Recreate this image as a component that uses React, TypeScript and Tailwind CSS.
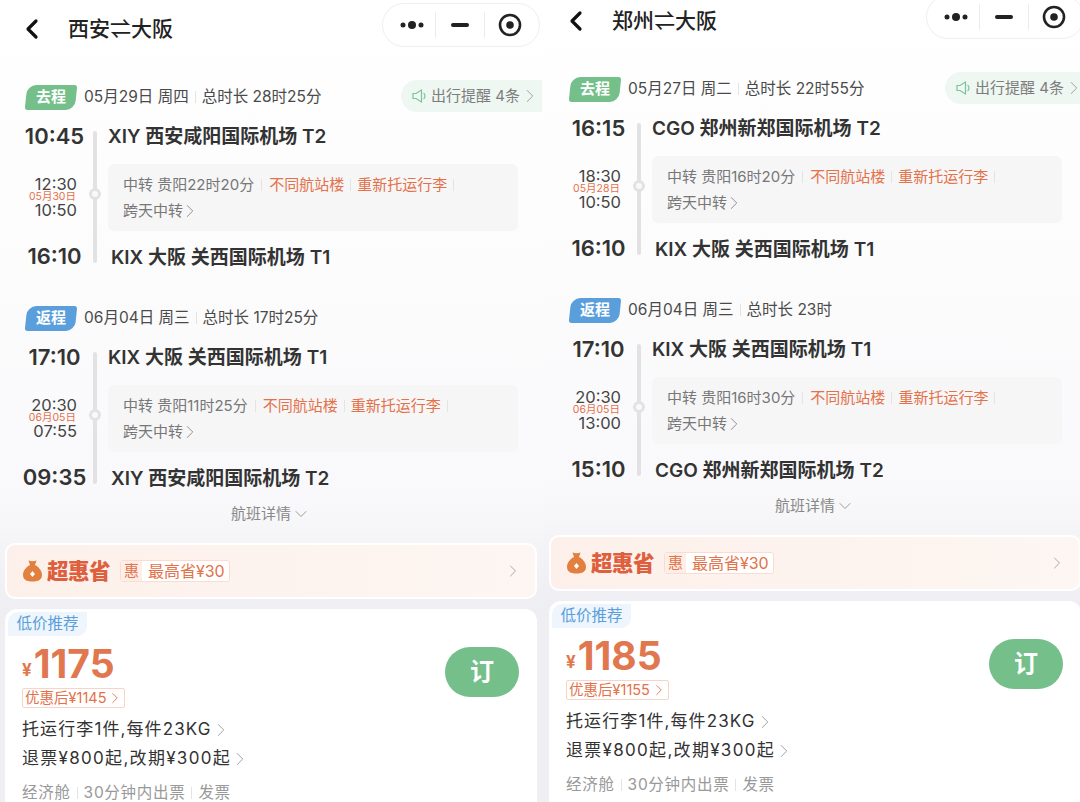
import { ChevronLeft, ChevronRight, ChevronDown } from "lucide-react";

const cjk = "font-['Inter','Noto_Sans_CJK_SC',sans-serif]";

type Leg = {
  tag: string;
  tagColor: string;
  date: string;
  total: string;
  dep: string;
  depPlace: string;
  arr1: string;
  dayNote: string;
  arr2: string;
  stop: string;
  end: string;
  endPlace: string;
};

function Sep({ wide }: { wide?: boolean }) {
  return (
    <span
      className={
        wide
          ? "mx-[7px] inline-block h-[12px] w-px bg-[#e4e4e4]"
          : "mx-[6px] inline-block h-[12px] w-px bg-[#e4e4e4]"
      }
    />
  );
}

function Capsule() {
  return (
    <div className="flex h-[44px] w-[158px] shrink-0 items-center rounded-full border border-[#efefef] bg-white/70">
      <div className="flex w-[52px] justify-center pl-[6px]">
        <svg width="26" height="10" viewBox="0 0 26 10" fill="#222">
          <circle cx="4" cy="5" r="2.5" />
          <circle cx="13" cy="5" r="4" />
          <circle cx="22" cy="5" r="2.5" />
        </svg>
      </div>
      <div className="h-[26px] w-px bg-[#ececec]" />
      <div className="flex w-[48px] justify-center">
        <div className="h-[4px] w-[18px] rounded-full bg-[#222]" />
      </div>
      <div className="h-[26px] w-px bg-[#ececec]" />
      <div className="flex flex-1 justify-center pr-[4px]">
        <svg width="24" height="24" viewBox="0 0 24 24" fill="none">
          <circle cx="12" cy="12" r="10" stroke="#222" strokeWidth="2.6" />
          <circle cx="12" cy="12" r="3.8" fill="#222" />
        </svg>
      </div>
    </div>
  );
}

function LegBlock({ leg }: { leg: Leg }) {
  return (
    <div>
      <div className="flex h-[28px] items-center">
        <div
          className={`ml-[26px] flex h-[25px] w-[50px] -skew-x-[6deg] items-center justify-center rounded-tl-[9px] rounded-tr-[3px] rounded-br-[9px] rounded-bl-[3px] ${leg.tagColor}`}
        >
          <span className="skew-x-[6deg] text-[15px] font-bold text-white">{leg.tag}</span>
        </div>
        <div className="ml-[8px] flex items-center text-[15.5px] whitespace-nowrap text-[#4a4a4a]">
          <span>{leg.date}</span>
          <Sep />
          <span>{leg.total}</span>
        </div>
      </div>
      <div className="mt-[12px] flex">
        <div className="relative -mt-px flex w-[108px] shrink-0 flex-col">
          <div className="h-[28px] w-[109px] text-center text-[22px] leading-[28px] font-semibold text-[#333]">{leg.dep}</div>
          <div className="mt-[26px] w-[77px] text-right text-[#444]">
            <div className="text-[16.5px] leading-[16px]">{leg.arr1}</div>
            <div className="pr-px text-[10.5px] leading-[10px] text-[#e4714a]">{leg.dayNote}</div>
            <div className="text-[16.5px] leading-[16px]">{leg.arr2}</div>
          </div>
          <div className="mt-[24px] h-[28px] w-[109px] text-center text-[22px] leading-[28px] font-semibold text-[#333]">{leg.end}</div>
          <div className="absolute top-[9px] left-[93px] h-[132px] w-[4px] rounded-full bg-[#e2e2e4]" />
          <div className="absolute top-[66px] left-[89px] size-[12px] rounded-full border-[3px] border-[#e2e2e4] bg-[#f9f9fa]" />
        </div>
        <div className="min-w-0 flex-1 pr-[26px]">
          <div className="h-[28px] text-[19px] leading-[28px] font-semibold whitespace-nowrap text-[#333]">{leg.depPlace}</div>
          <div className="mt-[13px] h-[67px] rounded-[6px] bg-[#f6f6f7] pt-[10px] pl-[15px] text-[15px] leading-[22px] text-[#777]">
            <div className="flex items-center whitespace-nowrap">
              <span>{leg.stop}</span>
              <Sep wide />
              <span className="text-[#e4714a]">不同航站楼</span>
              <Sep />
              <span className="text-[#e4714a]">重新托运行李</span>
              <Sep />
            </div>
            <div className="mt-[4px] flex items-center">
              跨天中转
              <ChevronRight size={22} strokeWidth={1} className="-ml-[4px] text-[#888]" />
            </div>
          </div>
          <div className="mt-[13px] ml-[3px] h-[28px] text-[19px] leading-[28px] font-semibold whitespace-nowrap text-[#333]">{leg.endPlace}</div>
        </div>
      </div>
    </div>
  );
}

function MoneyBag() {
  return (
    <svg width="19" height="22" viewBox="0 0 19 22">
      <path d="M5.5 0.5 Q9.5 2 13.5 0.5 L12 5 C16 7 19 11 19 15 C19 19.5 15.5 21.5 9.5 21.5 C3.5 21.5 0 19.5 0 15 C0 11 3 7 7 5 Z" fill="#e2803f" />
      <path d="M9.5 11 L12 14 L9.5 17 L7 14 Z" fill="#fff" />
    </svg>
  );
}

function Panel({
  title,
  price,
  after,
  legs,
  className,
}: {
  title: string;
  price: string;
  after: string;
  legs: Leg[];
  className: string;
}) {
  return (
    <div className={`w-[544px] shrink-0 overflow-hidden ${className}`}>
      <div className="h-[609px] bg-gradient-to-b from-white via-[#f9f9fb] via-[82%] to-[#eeeef3]">
        <div className="flex h-[58px] items-center">
          <ChevronLeft size={32} strokeWidth={2.4} className="ml-[16px] text-[#111]" />
          <div className="ml-[20px] flex-1 text-[21px] font-medium whitespace-nowrap text-[#222]">{title}</div>
          <div className="mr-[4px] -mt-[8px]">
            <Capsule />
          </div>
        </div>
        <div className="relative mt-[25px]">
          <div className="absolute top-[-3px] left-[401px] flex h-[32px] w-[141px] items-center rounded-l-full bg-[#eff7f2] pl-[11px] text-[15px] whitespace-nowrap text-[#7d7d7d]">
            <svg width="16" height="16" viewBox="0 0 16 16" fill="none" stroke="#79c596" strokeWidth="1.2" className="mr-[3px]">
              <path d="M1 5.5 H4 L9.5 2 V14 L4 10.5 H1 Z" />
              <path d="M11.5 5 C13.5 6.5 13.5 9.5 11.5 11" />
            </svg>
            出行提醒 4条
            <ChevronRight size={22} strokeWidth={1} className="-ml-[1px] text-[#999]" />
          </div>
          <LegBlock leg={legs[0]} />
          <div className="h-[32px]" />
          <LegBlock leg={legs[1]} />
        </div>
        <div className="mt-[10px] flex items-center justify-center pr-[2px] text-[15px] leading-[22px] text-[#888]">
          航班详情
          <ChevronDown size={20} strokeWidth={1} />
        </div>
        <div className="mt-[18px] mr-[7px] ml-[5px] flex h-[56px] items-center rounded-[10px] border-2 border-white bg-gradient-to-r from-[#fdf0ea] to-[#fdf6f2] pr-[12px] pl-[16px]">
          <MoneyBag />
          <span className="ml-[5px] text-[21.5px] font-black tracking-tight text-[#dd5f3e]">超惠省</span>
          <div className="ml-[10px] flex h-[22px] items-center rounded-[3px] border border-[#fbdcd0] bg-white text-[16px] text-[#e4714a]">
            <span className="flex h-full w-[21px] items-center justify-center bg-[#fdeee7] text-[15px]">惠</span>
            <span className="mr-[4px] ml-[6px]">最高省¥30</span>
          </div>
          <ChevronRight size={20} strokeWidth={1} className="ml-auto text-[#999]" />
        </div>
      </div>
      <div className="-mt-px h-[260px] bg-[#eeeef3] pt-px">
        <div className="mr-[7px] ml-[5px] h-full rounded-t-[12px] bg-white pl-[17px]">
          <div className="relative">
            <div className="absolute top-[3px] left-[-14px] flex h-[24px] w-[79px] items-center justify-center rounded-tl-[10px] rounded-br-[10px] bg-[#eef5fc] text-[15.5px] text-[#5a9fdc]">
              低价推荐
            </div>
            <div className="absolute top-[38px] right-[18px] flex h-[50px] w-[74px] items-center justify-center rounded-full bg-[#74bf8a] text-[24px] font-bold text-white">
              订
            </div>
          </div>
          <div className="flex h-[78px] items-end text-[#e0774f]">
            <span className="mr-[2px] mb-[4px] text-[17px] font-bold">¥</span>
            <span className="text-[39px] leading-[46px] font-bold">{price}</span>
          </div>
          <div className="mt-[1px] flex h-[20px] w-fit items-center rounded-[2px] border border-[#f9d4c6] pl-[2px] text-[14.5px] text-[#e4714a]">
            优惠后¥{after}
            <ChevronRight size={18} strokeWidth={1.2} />
          </div>
          <div className="mt-[10px] flex h-[24px] items-center text-[17px] tracking-[1.1px] text-[#333]">
            托运行李1件,每件23KG
            <ChevronRight size={22} strokeWidth={1} className="-ml-[2px] text-[#999]" />
          </div>
          <div className="mt-[5px] flex h-[24px] items-center text-[17px] tracking-[1.3px] text-[#333]">
            退票¥800起,改期¥300起
            <ChevronRight size={22} strokeWidth={1} className="-ml-[2px] text-[#999]" />
          </div>
          <div className="mt-[10px] flex h-[24px] items-center text-[15.5px] tracking-[0.7px] text-[#999]">
            经济舱
            <Sep />
            30分钟内出票
            <Sep />
            发票
          </div>
        </div>
      </div>
    </div>
  );
}

const leftLegs: Leg[] = [
  {
    tag: "去程",
    tagColor: "bg-[#74bf8a]",
    date: "05月29日 周四",
    total: "总时长 28时25分",
    dep: "10:45",
    depPlace: "XIY 西安咸阳国际机场 T2",
    arr1: "12:30",
    dayNote: "05月30日",
    arr2: "10:50",
    stop: "中转 贵阳22时20分",
    end: "16:10",
    endPlace: "KIX 大阪 关西国际机场 T1",
  },
  {
    tag: "返程",
    tagColor: "bg-[#5a9fdc]",
    date: "06月04日 周三",
    total: "总时长 17时25分",
    dep: "17:10",
    depPlace: "KIX 大阪 关西国际机场 T1",
    arr1: "20:30",
    dayNote: "06月05日",
    arr2: "07:55",
    stop: "中转 贵阳11时25分",
    end: "09:35",
    endPlace: "XIY 西安咸阳国际机场 T2",
  },
];

const rightLegs: Leg[] = [
  {
    tag: "去程",
    tagColor: "bg-[#74bf8a]",
    date: "05月27日 周二",
    total: "总时长 22时55分",
    dep: "16:15",
    depPlace: "CGO 郑州新郑国际机场 T2",
    arr1: "18:30",
    dayNote: "05月28日",
    arr2: "10:50",
    stop: "中转 贵阳16时20分",
    end: "16:10",
    endPlace: "KIX 大阪 关西国际机场 T1",
  },
  {
    tag: "返程",
    tagColor: "bg-[#5a9fdc]",
    date: "06月04日 周三",
    total: "总时长 23时",
    dep: "17:10",
    depPlace: "KIX 大阪 关西国际机场 T1",
    arr1: "20:30",
    dayNote: "06月05日",
    arr2: "13:00",
    stop: "中转 贵阳16时30分",
    end: "15:10",
    endPlace: "CGO 郑州新郑国际机场 T2",
  },
];

export default function App() {
  return (
    <div className={`flex h-[802px] w-[1080px] overflow-hidden bg-white ${cjk}`}>
      <Panel title="西安⇌大阪" price="1175" after="1145" legs={leftLegs} className="" />
      <Panel title="郑州⇌大阪" price="1185" after="1155" legs={rightLegs} className="-mt-[8px]" />
    </div>
  );
}
